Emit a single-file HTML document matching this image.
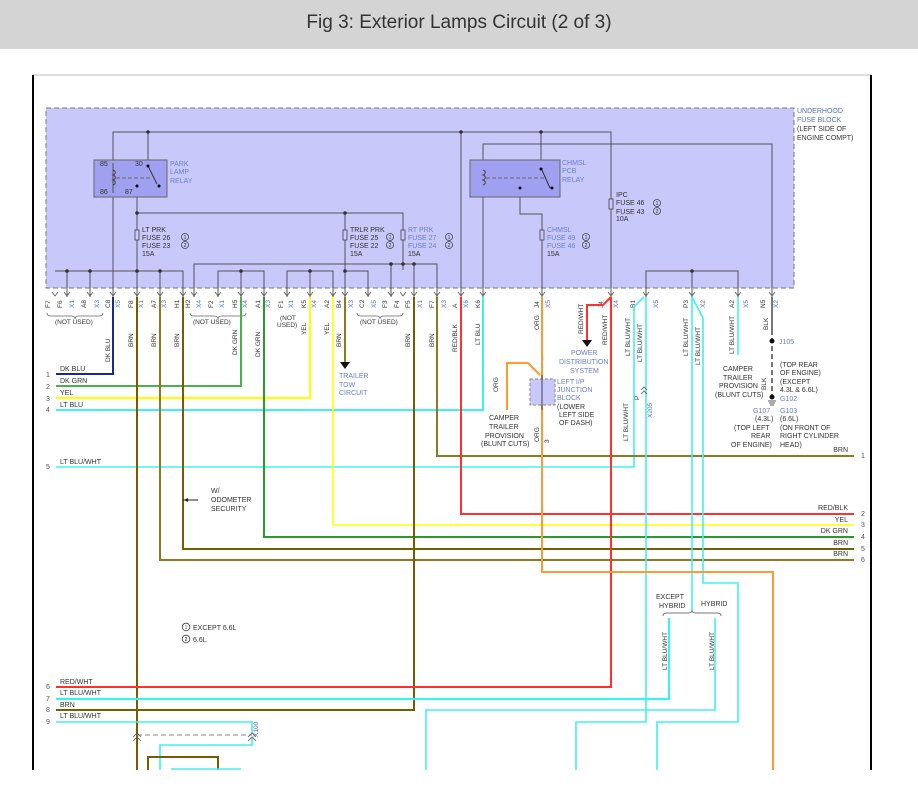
<!DOCTYPE html>
<html><head><meta charset="utf-8"><style>
html,body{margin:0;padding:0;background:#fff;width:918px;height:803px;overflow:hidden}
svg{display:block}
text{font-family:"Liberation Sans",sans-serif}
</style></head><body>
<svg width="918" height="803" viewBox="0 0 918 803" xmlns="http://www.w3.org/2000/svg">
<rect x="0" y="0" width="918" height="49" fill="#d4d4d4"/>
<text x="459" y="28" font-size="19" text-anchor="middle" fill="#333">Fig 3: Exterior Lamps Circuit (2 of 3)</text>
<line x1="33" y1="75" x2="871" y2="75" stroke="#bbb" stroke-width="1"/>
<line x1="33" y1="75" x2="33" y2="770" stroke="#000" stroke-width="2"/>
<line x1="871" y1="75" x2="871" y2="770" stroke="#000" stroke-width="2"/>

<!-- fuse block -->
<rect x="46" y="108" width="748" height="180" fill="#c8c8fa" stroke="#777" stroke-dasharray="5,3"/>
<g font-size="7" fill="#5070c0">
<text x="797" y="113">UNDERHOOD</text><text x="797" y="122">FUSE BLOCK</text>
<text x="797" y="131" fill="#333">(LEFT SIDE OF</text><text x="797" y="140" fill="#333">ENGINE COMPT)</text>
</g>
<g stroke="#555" stroke-width="1" fill="none">
<path d="M113 160V132H611V297"/>
<path d="M148 132V160"/>
<path d="M483 297V144H772V297"/>
<path d="M113 197V297"/>
<path d="M137 197V297"/>
<path d="M137 213H403V270"/>
<path d="M345 213V297"/>
<path d="M541 132V175"/>
<path d="M520 188V214H542V297"/>
<path d="M461 132V297"/>
<path d="M55 271H183V297M67 271V297M90 271V297M160 271V297"/>
<path d="M194 297V264H437V297M391 264V297M414 264V297"/>
<path d="M218 297V271H264V297M241 271V297"/>
<path d="M287 297V271H333V297M310 271V297"/>
<path d="M345 271H368V297"/>
<path d="M646 297V271H738V297M692 271V297"/>
</g>
<g fill="#333">
<circle cx="148" cy="132" r="1.8"/><circle cx="461" cy="132" r="1.8"/><circle cx="541" cy="132" r="1.8"/>
<circle cx="137" cy="213" r="1.8"/><circle cx="345" cy="213" r="1.8"/>
<circle cx="67" cy="271" r="1.8"/><circle cx="90" cy="271" r="1.8"/><circle cx="137" cy="271" r="1.8"/><circle cx="160" cy="271" r="1.8"/>
<circle cx="241" cy="271" r="1.8"/><circle cx="310" cy="271" r="1.8"/><circle cx="345" cy="271" r="1.8"/>
<circle cx="391" cy="264" r="1.8"/><circle cx="403" cy="264" r="1.8"/><circle cx="414" cy="264" r="1.8"/>
<circle cx="692" cy="271" r="1.8"/>
</g>
<!-- relays -->
<rect x="94" y="160" width="73" height="37" fill="#a0a0f0" stroke="#666"/>
<g font-size="7" fill="#333"><text x="100" y="166">85</text><text x="100" y="194">86</text><text x="135" y="166">30</text><text x="125" y="194">87</text></g>
<path d="M113 163v30" stroke="#555" fill="none"/>
<path d="M113 170c3 1 3 4 0 5c3 1 3 4 0 5c3 1 3 4 0 5" stroke="#444" fill="none"/>
<path d="M116 178H150" stroke="#666" stroke-dasharray="4,2"/>
<path d="M148 166l9 18" stroke="#333"/><circle cx="148" cy="166" r="1.5"/><circle cx="159" cy="186" r="1.5"/><circle cx="137" cy="186" r="1.5"/>
<g font-size="7" fill="#6a80c8"><text x="170" y="166">PARK</text><text x="170" y="174">LAMP</text><text x="170" y="183">RELAY</text></g>
<rect x="470" y="160" width="90" height="37" fill="#a0a0f0" stroke="#666"/>
<path d="M483 170c3 1 3 4 0 5c3 1 3 4 0 5c3 1 3 4 0 5" stroke="#444" fill="none"/>
<path d="M486 178H545" stroke="#666" stroke-dasharray="4,2"/>
<path d="M541 168l9 20" stroke="#333"/><circle cx="541" cy="169" r="1.5"/><circle cx="552" cy="188" r="1.5"/><circle cx="520" cy="188" r="1.5"/>
<g font-size="7" fill="#6a80c8"><text x="562" y="165">CHMSL</text><text x="562" y="173">PCB</text><text x="562" y="182">RELAY</text></g>
<!-- fuse labels -->
<g font-size="7" fill="#333">
<text x="142" y="232">LT PRK</text><text x="142" y="240">FUSE 26</text><text x="142" y="248">FUSE 23</text><text x="142" y="256">15A</text>
<text x="350" y="232">TRLR PRK</text><text x="350" y="240">FUSE 25</text><text x="350" y="248">FUSE 22</text><text x="350" y="256">15A</text>
<text x="408" y="232" fill="#6a80c8">RT PRK</text><text x="408" y="240" fill="#6a80c8">FUSE 27</text><text x="408" y="248" fill="#6a80c8">FUSE 24</text><text x="408" y="256">15A</text>
<text x="547" y="232" fill="#6a80c8">CHMSL</text><text x="547" y="240" fill="#6a80c8">FUSE 49</text><text x="547" y="248" fill="#6a80c8">FUSE 46</text><text x="547" y="256">15A</text>
<text x="616" y="197">IPC</text><text x="616" y="205">FUSE 46</text><text x="616" y="214">FUSE 43</text><text x="616" y="221">10A</text>
</g>
<g fill="none" stroke="#444" stroke-width="0.8">
<circle cx="185" cy="237" r="3.5"/><circle cx="185" cy="245" r="3.5"/>
<circle cx="390" cy="237" r="3.5"/><circle cx="390" cy="245" r="3.5"/>
<circle cx="449" cy="237" r="3.5"/><circle cx="449" cy="245" r="3.5"/>
<circle cx="586" cy="237" r="3.5"/><circle cx="586" cy="245" r="3.5"/>
<circle cx="657" cy="203" r="3.5"/><circle cx="657" cy="211" r="3.5"/>
</g>
<g font-size="5" fill="#333" text-anchor="middle">
<text x="185" y="239">1</text><text x="185" y="247">2</text><text x="390" y="239">1</text><text x="390" y="247">2</text>
<text x="449" y="239">1</text><text x="449" y="247">2</text><text x="586" y="239">1</text><text x="586" y="247">2</text>
<text x="657" y="205">1</text><text x="657" y="213">2</text>
</g>
<g fill="#c8c8fa" stroke="#444" stroke-width="0.8">
<rect x="135" y="230" width="4" height="10"/><rect x="343" y="230" width="4" height="10"/><rect x="401" y="230" width="4" height="10"/><rect x="540" y="230" width="4" height="10"/><rect x="609" y="199" width="4" height="10"/>
</g>
<!-- connector chevrons -->
<g stroke="#555" fill="none" stroke-width="0.8" id="chev">
<path d="M52 292l3 4 3-4M64 292l3 4 3-4M87 292l3 4 3-4M110 292l3 4 3-4M134 292l3 4 3-4M157 292l3 4 3-4M180 292l3 4 3-4M191 292l3 4 3-4M215 292l3 4 3-4M238 292l3 4 3-4M261 292l3 4 3-4M284 292l3 4 3-4M307 292l3 4 3-4M330 292l3 4 3-4M342 292l3 4 3-4M365 292l3 4 3-4M388 292l3 4 3-4M400 292l3 4 3-4M411 292l3 4 3-4M434 292l3 4 3-4M458 292l3 4 3-4M480 292l3 4 3-4M539 292l3 4 3-4M608 292l3 4 3-4M643 292l3 4 3-4M689 292l3 4 3-4M735 292l3 4 3-4M769 292l3 4 3-4"/>
</g>
<!-- pin labels -->
<g font-size="6.5" fill="#333">
<g transform="rotate(-90)">
<text x="-308" y="50">F7</text><text x="-308" y="62">F6</text><text x="-308" y="74" fill="#5070c0">X1</text><text x="-308" y="86">A8</text><text x="-308" y="99" fill="#5070c0">X3</text>
<text x="-308" y="110">C8</text><text x="-308" y="120" fill="#5070c0">X5</text><text x="-308" y="133">F8</text><text x="-308" y="143" fill="#5070c0">X1</text>
<text x="-308" y="156">A7</text><text x="-308" y="166" fill="#5070c0">X3</text><text x="-308" y="179">H1</text><text x="-308" y="190">H2</text><text x="-308" y="201" fill="#5070c0">X4</text>
<text x="-308" y="213">F2</text><text x="-308" y="224" fill="#5070c0">X1</text><text x="-308" y="237">H5</text><text x="-308" y="247" fill="#5070c0">X4</text>
<text x="-308" y="260">A1</text><text x="-308" y="270" fill="#5070c0">X3</text><text x="-308" y="283">F1</text><text x="-308" y="293" fill="#5070c0">X1</text>
<text x="-308" y="306">K5</text><text x="-308" y="316" fill="#5070c0">X4</text><text x="-308" y="329">A2</text><text x="-308" y="341">B4</text><text x="-308" y="353" fill="#5070c0">X3</text>
<text x="-308" y="364">C2</text><text x="-308" y="376" fill="#5070c0">X5</text><text x="-308" y="387">F3</text><text x="-308" y="399">F4</text><text x="-308" y="410">F5</text>
<text x="-308" y="422" fill="#5070c0">X1</text><text x="-308" y="434">F7</text><text x="-308" y="446" fill="#5070c0">X3</text><text x="-308" y="457">A</text><text x="-308" y="468" fill="#5070c0">X6</text><text x="-308" y="480">K6</text>
<text x="-308" y="539">J4</text><text x="-308" y="550" fill="#5070c0">X5</text><text x="-308" y="603">J4</text><text x="-308" y="618" fill="#5070c0">X4</text>
<text x="-308" y="635">B1</text><text x="-308" y="658" fill="#5070c0">X5</text><text x="-308" y="688">P3</text><text x="-308" y="705" fill="#5070c0">X2</text>
<text x="-308" y="734">A2</text><text x="-308" y="748" fill="#5070c0">X5</text><text x="-308" y="765">N5</text><text x="-308" y="778" fill="#5070c0">X2</text>
<!-- wire labels -->
<text x="-362" y="110">DK BLU</text><text x="-347" y="133">BRN</text><text x="-347" y="156">BRN</text><text x="-347" y="179">BRN</text>
<text x="-355" y="237">DK GRN</text><text x="-357" y="260">DK GRN</text><text x="-335" y="306">YEL</text><text x="-335" y="329">YEL</text><text x="-347" y="341">BRN</text>
<text x="-347" y="410">BRN</text><text x="-347" y="434">BRN</text><text x="-352" y="457">RED/BLK</text><text x="-345" y="480">LT BLU</text><text x="-330" y="539">ORG</text>
<text x="-334" y="583">RED/WHT</text><text x="-345" y="607">RED/WHT</text><text x="-356" y="630">LT BLU/WHT</text><text x="-362" y="642">LT BLU/WHT</text>
<text x="-356" y="688">LT BLU/WHT</text><text x="-365" y="700">LT BLU/WHT</text><text x="-354" y="734">LT BLU/WHT</text><text x="-330" y="768">BLK</text>
<text x="-392" y="498">ORG</text><text x="-441" y="628">LT BLU/WHT</text><text x="-390" y="766">BLK</text>
<text x="-400" y="639">P</text><text x="-418" y="652" fill="#5070c0">X205</text>
<text x="-442" y="539">ORG</text><text x="-440" y="537"> </text><text x="-443" y="549">3</text><text x="-445" y="550"> </text>
<text x="-670" y="667">LT BLU/WHT</text><text x="-670" y="714">LT BLU/WHT</text>
<text x="-737" y="258" fill="#5070c0">X100</text>
</g>
<text x="55" y="324">(NOT USED)</text><text x="193" y="324">(NOT USED)</text><text x="280" y="320">(NOT</text><text x="277" y="327">USED)</text><text x="360" y="324">(NOT USED)</text>
</g>
<g stroke="#666" fill="none" stroke-width="0.8">
<path d="M47 313q0 3 4 3h20q4 0 4 3q0-3 4-3h20q4 0 4-3"/>
<path d="M190 313q0 3 4 3h20q4 0 4 3q0-3 4-3h20q4 0 4-3"/>
<path d="M357 313q0 3 4 3h15q4 0 4 3q0-3 4-3h15q4 0 4-3"/>
</g>

<!-- wires -->
<g fill="none" stroke-width="2">
<path d="M56 374H113V297" stroke="#1a2a8a"/>
<path d="M56 386H241V297" stroke="#4caf50"/>
<path d="M56 398H310V297" stroke="#ffff00"/>
<path d="M56 410H483V297" stroke="#40f0f0"/>
<path d="M56 467H634V307L644 297" stroke="#40f0f0" stroke-width="1.6"/>
<path d="M437 297V456H854" stroke="#8b7a20"/>
<path d="M461 297V514H854" stroke="#ff3030"/>
<path d="M333 297V525H854" stroke="#ffff00" stroke-width="1.6"/>
<path d="M264 297V537H854" stroke="#2a9a2a"/>
<path d="M183 297V549H854" stroke="#7a5c00"/>
<path d="M160 297V560H854" stroke="#8b7a20"/>
<path d="M137 297V770" stroke="#7a5c00"/>
<path d="M414 297V710H56" stroke="#7a5c00"/>
<path d="M345 297V362" stroke="#8b7a20"/>
<path d="M611 297V687H56" stroke="#ff3030"/>
<path d="M611 297L603 305H587V340" stroke="#ff3030"/>
<path d="M646 297V722H576V770" stroke="#40f0f0" stroke-width="1.6"/>
<path d="M692 297V610" stroke="#40f0f0" stroke-width="1.6"/>
<path d="M692 297L703 318V583H738V722H657V770" stroke="#40f0f0" stroke-width="1.6"/>
<path d="M738 297V355" stroke="#40f0f0" stroke-width="1.6"/>
<path d="M542 297V572H773V770" stroke="#ff9933"/>
<path d="M507 410V363H528L540 375" stroke="#ff9933"/>
<path d="M56 699H669V618" stroke="#40f0f0" stroke-width="2.2"/>
<path d="M426 770V710H715V618" stroke="#40f0f0" stroke-width="1.6"/>
<path d="M56 722H252V733" stroke="#40f0f0" stroke-width="1.6"/>
<path d="M252 738V745H160V770" stroke="#40f0f0" stroke-width="1.6"/>
<path d="M148 770V757H218V770" stroke="#7a5c00"/>
<path d="M172 770V769H241" stroke="#40f0f0" stroke-width="1.6"/>
<path d="M772 297V330" stroke="#777"/>
<path d="M772 330V400" stroke="#777" stroke-dasharray="5,3"/>
</g>
<path d="M340 362h10l-5 7z" fill="#111"/>
<path d="M582 340h10l-5 7z" fill="#111"/>
<path d="M137 735H252" stroke="#888" stroke-dasharray="5,3"/>
<path d="M133 737l4-4 4 4M248 737l4-4 4 4M133 741l4-4 4 4M248 741l4-4 4 4" stroke="#555" fill="none" stroke-width="0.8"/>
<path d="M183 500H198" stroke="#222"/><path d="M184 500l4-2v4z" fill="#222"/>
<circle cx="772" cy="341" r="2.5" fill="#111"/><circle cx="772" cy="397" r="2.5" fill="#111"/>
<path d="M768 401h8M769 403h6M770 405h4" stroke="#555"/>
<rect x="530" y="379" width="25" height="26" fill="#c8c8fa" stroke="#888" stroke-dasharray="3,2"/>
<path d="M542 375V410" stroke="#444"/>
<path d="M641 390l3-3 3 3M641 394l3-3 3 3" stroke="#555" fill="none" stroke-width="0.8"/>

<g font-size="7" fill="#333">
<text x="46" y="377" fill="#555">1</text><text x="60" y="371">DK BLU</text>
<text x="46" y="389" fill="#555">2</text><text x="60" y="383">DK GRN</text>
<text x="46" y="401" fill="#555">3</text><text x="60" y="395">YEL</text>
<text x="46" y="412" fill="#555">4</text><text x="60" y="407">LT BLU</text>
<text x="46" y="469" fill="#555">5</text><text x="60" y="464">LT BLU/WHT</text>
<text x="46" y="689" fill="#555">6</text><text x="60" y="684">RED/WHT</text>
<text x="46" y="701" fill="#555">7</text><text x="60" y="695">LT BLU/WHT</text>
<text x="46" y="712" fill="#555">8</text><text x="60" y="707">BRN</text>
<text x="46" y="724" fill="#555">9</text><text x="60" y="718">LT BLU/WHT</text>
<g text-anchor="end"><text x="848" y="452">BRN</text><text x="848" y="510">RED/BLK</text><text x="848" y="522">YEL</text><text x="848" y="533">DK GRN</text><text x="848" y="545">BRN</text><text x="848" y="556">BRN</text></g>
<text x="861" y="458" fill="#555">1</text><text x="861" y="516" fill="#555">2</text><text x="861" y="527" fill="#555">3</text><text x="861" y="539" fill="#555">4</text><text x="861" y="551" fill="#555">5</text><text x="861" y="562" fill="#555">6</text>
<text x="211" y="493">W/</text><text x="211" y="502">ODOMETER</text><text x="211" y="511">SECURITY</text>
<g fill="#6a80c8"><text x="339" y="378">TRAILER</text><text x="339" y="387">TOW</text><text x="339" y="395">CIRCUIT</text>
<text x="571" y="355">POWER</text><text x="559" y="364">DISTRIBUTION</text><text x="570" y="373">SYSTEM</text>
<text x="557" y="384">LEFT I/P</text><text x="557" y="392">JUNCTION</text><text x="557" y="400">BLOCK</text>
<text x="779" y="344">J105</text><text x="780" y="401">G102</text><text x="753" y="413">G107</text><text x="780" y="413">G103</text></g>
<text x="557" y="409">(LOWER</text><text x="559" y="417">LEFT SIDE</text><text x="559" y="425">OF DASH)</text>
<text x="489" y="420">CAMPER</text><text x="489" y="429">TRAILER</text><text x="485" y="438">PROVISION</text><text x="481" y="446">(BLUNT CUTS)</text>
<text x="723" y="371">CAMPER</text><text x="723" y="380">TRAILER</text><text x="719" y="388">PROVISION</text><text x="715" y="397">(BLUNT CUTS)</text>
<text x="780" y="367">(TOP REAR</text><text x="780" y="375">OF ENGINE)</text><text x="780" y="384">(EXCEPT</text><text x="780" y="392">4.3L &amp; 6.6L)</text>
<text x="755" y="421">(4.3L)</text><text x="780" y="421">(6.6L)</text><text x="734" y="430">(TOP LEFT</text><text x="780" y="430">(ON FRONT OF</text>
<text x="751" y="438">REAR</text><text x="780" y="438">RIGHT CYLINDER</text><text x="731" y="447">OF ENGINE)</text><text x="780" y="447">HEAD)</text>
<text x="656" y="599">EXCEPT</text><text x="659" y="608">HYBRID</text><text x="701" y="606">HYBRID</text>
<text x="193" y="630">EXCEPT 6.6L</text><text x="193" y="642">6.6L</text>
</g>
<path d="M663 616q0-3 4-3h21q4 0 4-3q0 3 4 3h21q4 0 4 3" stroke="#777" fill="none"/>
<circle cx="186" cy="627" r="3.8" fill="none" stroke="#444" stroke-width="0.8"/><circle cx="186" cy="639" r="3.8" fill="none" stroke="#444" stroke-width="0.8"/>
<text x="186" y="629" font-size="5" text-anchor="middle" fill="#c03030">1</text><text x="186" y="641" font-size="5" text-anchor="middle">2</text>
</svg>
</body></html>
